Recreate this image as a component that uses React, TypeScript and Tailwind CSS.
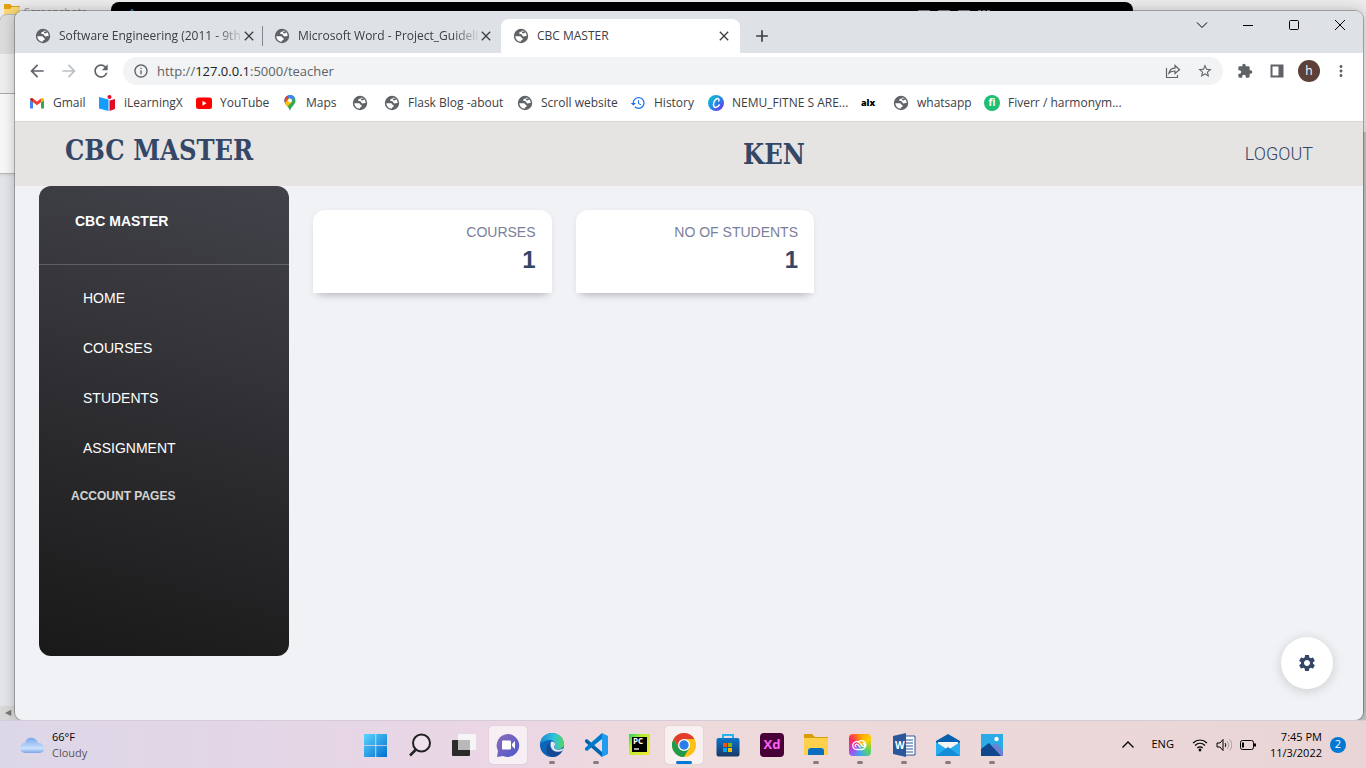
import React from "react";
import { MdExtension, MdStarBorder, MdArrowBack, MdArrowForward, MdRefresh, MdHistory, MdMoreVert, MdAdd, MdClose, MdInfoOutline, MdSettings } from "react-icons/md";

function Globe() {
  return (
    <svg viewBox="0 0 16 16" className="size-4 shrink-0" aria-hidden="true">
      <circle cx="8" cy="8" r="7.2" fill="#5f6368" />
      <path d="M2.300 8.300h3.800c1.500 0 2.400.6 2.500 1.700 1.300.1 1.400.8 1 1.500-.4.700-1.700.6-1.800 1.500v.7c-3-.2-5.300-2.300-5.500-5.400z" fill="#fff" />
      <path d="M9.300 2.400c-.2.900-.9 1.100-1.800 1.400-1.400.4-1.700 1.700-.8 2.200.8.400 1.300.1 2 .6.700.5.500 1.300 1.300 1.700 1.200.6 2.100-.5 3.600-.1.400-2.600-1.500-5.200-4.300-5.800z" fill="#fff" />
      <path d="M9 3.700l2.500-.4.600 1.200-1.600.9-1.500-.3z" fill="#5f6368" />
    </svg>
  );
}

function Tab({ title, active = false }: { title: string; active?: boolean }) {
  return (
    <div
      className={
        active
          ? "flex h-[34px] w-[239px] shrink-0 items-center rounded-t-lg bg-white pl-3 pr-2"
          : "flex h-[34px] w-[239px] shrink-0 items-center pl-3 pr-2"
      }
    >
      <Globe />
      <span
        className={
          active
            ? "ml-2 flex-1 whitespace-nowrap"
            : "ml-2 flex-1 whitespace-nowrap [mask-image:linear-gradient(to_right,black_86%,transparent_102%)]"
        }
      >
        {title}
      </span>
      <button aria-label={"Close " + title} className="text-[#3c4043]">
        <MdClose className="size-4" />
      </button>
    </div>
  );
}

function Bookmark({ icon, label, width }: { icon: React.ReactNode; label?: string; width: string }) {
  return (
    <a href="#" aria-label={label || "Bookmark"} className={"flex shrink-0 items-center gap-2 whitespace-nowrap " + width}>
      {icon}
      {label && <span>{label}</span>}
    </a>
  );
}

const Gmail = () => (
  <svg viewBox="0 0 16 16" className="size-4">
    <path d="M1 13.500h3V7.300L1 5z" fill="#4285f4" />
    <path d="M12 13.500h3V5l-3 2.300z" fill="#34a853" />
    <path d="M4 3.500l4 3 4-3v3.800l-4 3-4-3z" fill="#ea4335" />
    <path d="M1 5c0-2 1.700-2.400 3-1.500v3.800z" fill="#c5221f" />
    <path d="M15 5c0-2-1.700-2.400-3-1.500v3.800z" fill="#fbbc04" />
  </svg>
);
const Learning = () => (
  <svg viewBox="0 0 17 16" className="h-4 w-[17px]">
    <path d="M0 2l9.500 2.500V16L0 13.500z" fill="#169bff" />
    <path d="M10.500 5.500L16 4v10l-5.500 2z" fill="#e50a24" />
    <circle cx="10.500" cy="2" r="2" fill="#e50a24" />
  </svg>
);
const YouTube = () => (
  <svg viewBox="0 0 16 16" className="size-4">
    <rect y="2.500" width="16" height="11.500" rx="2.500" fill="#f00" />
    <path d="M6.500 5.800v5l4-2.500z" fill="#fff" />
  </svg>
);
const Maps = () => (
  <svg viewBox="0 0 16 16" className="size-4">
    <defs>
      <clipPath id="pin"><path d="M8 0a5.500 5.500 0 0 1 5.500 5.500C13.500 9.500 9.500 11 8 16 6.500 11 2.500 9.500 2.500 5.500A5.500 5.500 0 0 1 8 0z" /></clipPath>
    </defs>
    <g clipPath="url(#pin)">
      <path d="M0 0h16v16H0z" fill="#34a853" />
      <path d="M2 8L12 0 8 0 0 4z" fill="#1a73e8" />
      <path d="M0 3l4-3 4 5-5 6z" fill="#ea4335" />
      <path d="M5 0h8l2 2-7 4z" fill="#4285f4" />
      <path d="M2 9l5-6 3 4-6 6z" fill="#fbbc04" />
    </g>
    <circle cx="8" cy="5.500" r="2" fill="#fff" />
  </svg>
);
const Canva = () => (
  <svg viewBox="0 0 16 16" className="size-4">
    <defs>
      <linearGradient id="canva" x1="0" y1="0" x2="1" y2="1"><stop stopColor="#00d1c8" /><stop offset=".55" stopColor="#2b7fe8" /><stop offset="1" stopColor="#8b1fe8" /></linearGradient>
    </defs>
    <circle cx="8" cy="8" r="8" fill="url(#canva)" />
    <path d="M10.800 6c1-2.500-1.200-3.300-3.100-1.600-3 2.700-2.900 7.900-.1 8 1.700 0 3-1.200 3.700-2.500" fill="none" stroke="#fff" strokeWidth="1.500" strokeLinecap="round" />
  </svg>
);

const bookmarks: { icon: React.ReactNode; label?: string; width: string }[] = [
  { icon: <Gmail />, label: "Gmail", width: "w-[70px]" },
  { icon: <Learning />, label: "iLearningX", width: "w-[97px]" },
  { icon: <YouTube />, label: "YouTube", width: "w-[86px]" },
  { icon: <Maps />, label: "Maps", width: "w-[70px]" },
  { icon: <Globe />, width: "w-8" },
  { icon: <Globe />, label: "Flask Blog -about", width: "w-[133px]" },
  { icon: <Globe />, label: "Scroll website", width: "w-[113px]" },
  { icon: <MdHistory className="size-4 text-[#1a73e8]" />, label: "History", width: "w-[78px]" },
  { icon: <Canva />, label: "NEMU_FITNE S ARE...", width: "w-[153px]" },
  { icon: <span className="w-4 text-[9px] font-black text-black">alx</span>, width: "w-8" },
  { icon: <Globe />, label: "whatsapp", width: "w-[91px]" },
  { icon: <span className="flex size-4 items-center justify-center rounded-full bg-[#1dbf73] text-[10px] font-bold text-white">fi</span>, label: "Fiverr / harmonym...", width: "w-[140px]" },
];

function Chrome() {
  return (
    <header className="text-xs text-[#3c4043]">
      <div className="flex h-[42px] rounded-t-lg bg-[#dee1e6]">
        <div className="flex min-w-0 items-end pl-2">
          <Tab title="Software Engineering (2011 - 9th" />
          <div className="-mr-px mb-[7px] h-5 w-px shrink-0 bg-[#80868b]" />
          <Tab title="Microsoft Word - Project_Guideli" />
          <Tab title="CBC MASTER" active />
          <button aria-label="New tab" className="mb-[7px] ml-3"><MdAdd className="size-5" /></button>
        </div>
        <div className="ml-auto flex h-7 items-center gap-8 pr-4 text-black">
          <button aria-label="Search tabs"><svg viewBox="0 0 14 14" className="size-3.5"><path d="M2 4.500L7 9.500l5-5" fill="none" stroke="currentColor" /></svg></button>
          <button aria-label="Minimize"><svg viewBox="0 0 14 14" className="size-3.5"><path d="M2 7.500h10" stroke="currentColor" /></svg></button>
          <button aria-label="Maximize"><svg viewBox="0 0 14 14" className="size-3.5"><rect x="2.500" y="2.500" width="9" height="9" rx="1" fill="none" stroke="currentColor" /></svg></button>
          <button aria-label="Close window"><svg viewBox="0 0 14 14" className="size-3.5"><path d="M2 2l10 10M12 2L2 12" stroke="currentColor" /></svg></button>
        </div>
      </div>
      <div className="flex h-9 items-center bg-white pl-3 pr-[13px] text-[#5f6368]">
        <button aria-label="Back" className="mr-3"><MdArrowBack className="size-5" /></button>
        <button aria-label="Forward" className="mr-3 text-[#bcc0c4]"><MdArrowForward className="size-5" /></button>
        <button aria-label="Reload" className="mr-3"><MdRefresh className="size-5" /></button>
        <div className="flex h-7 flex-1 items-center rounded-full bg-[#f1f3f4] pl-2.5 pr-2.5">
          <MdInfoOutline className="size-4" />
          <a href="#" className="ml-2 flex-1 pt-px text-[13px]">http://<span className="text-[#202124]">127.0.0.1</span>:5000/teacher</a>
          <button aria-label="Share" className="mr-4">
            <svg viewBox="0 0 16 16" className="size-4"><path d="M1.500 5v9.500h11V12M4 10c.8-3.200 3-4.800 6-4.800V2.500l4.500 4.200L10 10.500V8c-2.500 0-4.500.5-6 2z" fill="none" stroke="currentColor" strokeWidth="1.200" /></svg>
          </button>
          <button aria-label="Bookmark this page"><MdStarBorder className="size-4" /></button>
        </div>
        <button aria-label="Extensions" className="ml-3.5"><MdExtension className="size-4" /></button>
        <button aria-label="Side panel" className="ml-4"><svg viewBox="0 0 16 16" className="size-4"><path d="M1.500 1.500h13v13h-13zM3.500 3.500v9h6v-9z" fill="currentColor" fillRule="evenodd" /></svg></button>
        <button aria-label="Profile" className="ml-[13px] size-[22px] rounded-full bg-[#5d4037] text-white">h</button>
        <button aria-label="Menu" className="ml-3"><MdMoreVert className="size-[18px]" /></button>
      </div>
      <nav aria-label="Bookmarks" className="flex h-8 items-center overflow-hidden bg-white pb-1 pl-3.5">
        {bookmarks.map((b, i) => <Bookmark key={i} {...b} />)}
      </nav>
    </header>
  );
}

function StatCard({ label, value }: { label: string; value: string }) {
  return (
    <div className="h-[83px] rounded-t-xl bg-white px-4 pt-3 text-right shadow-[0_8px_8px_-6px_rgba(0,0,0,0.2),0_2px_6px_rgba(0,0,0,0.06)]">
      <p className="text-sm leading-5 text-[#7b809a]">{label}</p>
      <h4 className="text-2xl font-bold leading-9 text-[#344767]">{value}</h4>
    </div>
  );
}

function Page() {
  return (
    <div className="relative flex flex-1 flex-col rounded-b-lg bg-[#f0f2f5] font-['Liberation_Sans',Arial,sans-serif]">
      <div className="grid h-[65px] grid-cols-3 items-center border-t border-[#d5d6d8] bg-[#e5e4e2] px-[50px] text-[#344767]">
        <h1 className="pb-1.5 font-['DejaVu_Serif_Condensed','DejaVu_Serif',serif] text-[27px] font-bold leading-8">CBC MASTER</h1>
        <h2 className="pl-[170px] pt-0.5 text-center font-['DejaVu_Serif_Condensed','DejaVu_Serif',serif] text-[27px] font-bold leading-8">KEN</h2>
        <a href="#" className="justify-self-end font-[Roboto,sans-serif] text-lg font-light">LOGOUT</a>
      </div>
      <div className="flex items-start gap-6 px-6">
        <aside className="h-[470px] w-[250px] shrink-0 rounded-xl bg-[linear-gradient(195deg,#42424a,#191919)] text-sm text-white">
          <div className="h-[79px] border-b border-white/20 pl-9 pt-[25px] font-bold">CBC MASTER</div>
          <nav className="pl-11 pt-2">
            {["HOME", "COURSES", "STUDENTS", "ASSIGNMENT"].map((item) => (
              <a key={item} href="#" className="flex h-[50px] items-center">{item}</a>
            ))}
          </nav>
          <h6 className="pl-8 pt-[15px] text-xs font-bold text-white/80">ACCOUNT PAGES</h6>
        </aside>
        <main className="grid flex-1 grid-cols-4 gap-6 pt-6">
          <StatCard label="COURSES" value="1" />
          <StatCard label="NO OF STUDENTS" value="1" />
        </main>
      </div>
      <button aria-label="Settings" className="absolute bottom-[31px] right-[30px] flex size-[52px] items-center justify-center rounded-full bg-white text-[#344767] shadow-[0_2px_12px_rgba(0,0,0,0.16)]">
        <MdSettings className="size-5" />
      </button>
    </div>
  );
}

const Svg = ({ children }: { children: React.ReactNode }) => <svg viewBox="0 0 24 24" className="size-6">{children}</svg>;

const apps: { name: string; run?: boolean; active?: boolean; icon: React.ReactNode }[] = [
  { name: "Start", icon: <Svg><defs><linearGradient id="win" x1="0" y1="0" x2="1" y2="1"><stop stopColor="#5cd5ff" /><stop offset="1" stopColor="#006fd0" /></linearGradient></defs><path d="M0 1h11.300v11.200H0zM12.200 1H23v11.200H12.200zM0 13h11.300v11H0zM12.200 13H23v11H12.200z" fill="url(#win)" /></Svg> },
  { name: "Search", icon: <Svg><circle cx="13.500" cy="10" r="8.500" fill="#fff" fillOpacity=".3" stroke="#222" strokeWidth="2" /><path d="M8 16.500L2 22.500" stroke="#222" strokeWidth="2.500" /></Svg> },
  { name: "Task view", icon: <Svg><rect x="0" y="7" width="18" height="16" rx="1" fill="#2b2b2b" /><rect x="6" y="1" width="18" height="16" rx="1" fill="#f5f5f5" /><path d="M6 7h12v10H6z" fill="#b8b8b8" /></Svg> },
  { name: "Chat", active: true, icon: <Svg><defs><linearGradient id="chat" x1="0" y1="0" x2="1" y2="1"><stop stopColor="#8f6bb8" /><stop offset="1" stopColor="#4a58cc" /></linearGradient></defs><path d="M12 1a11.500 11.500 0 1 1-5 22L1 24l1-6A11.500 11.500 0 0 1 12 1z" fill="url(#chat)" /><rect x="6" y="7.500" width="9" height="9" rx="1" fill="#fff" /><path d="M16 11l3-3v8l-3-3z" fill="#fff" /></Svg> },
  { name: "Edge", run: true, icon: <Svg><defs><linearGradient id="edge" x1="0" x2="1"><stop stopColor="#1688d8" /><stop offset=".6" stopColor="#30c5dc" /><stop offset="1" stopColor="#55d65b" /></linearGradient></defs><circle cx="12" cy="12" r="12" fill="#0b65b8" /><path d="M0 11C1 4 6 0 12 0c8 0 12 6 12 11 0 4-4 6-8 5-3-.7-1-2-1-5 0-2-2-4-5-4-4 0-8 2-10 4z" fill="url(#edge)" /><path d="M10 9c-2 5 2 10 8 10 2 0 3-.5 4-1-2 4-6 6-10 6-6-1-8-9-2-15z" fill="#154994" /><path d="M11 9c1-1 4 0 4 2 0 2-2 3 0 5 3 1 6 1 9-1l-2 3c-8 3-13-3-11-9z" fill="#eee4ed" /></Svg> },
  { name: "Visual Studio Code", run: true, icon: <Svg><path d="M1 7l2-1 15 13v5L1 9z" fill="#0065a9" /><path d="M1 17l2 1L18 6V0L1 15z" fill="#007acc" /><path d="M18 0l6 3v18l-6 3z" fill="#1f9cf0" /></Svg> },
  { name: "PyCharm", icon: <Svg><defs><linearGradient id="py" x1="0" y1="0" x2="1" y2="1"><stop stopColor="#21d75a" /><stop offset=".35" stopColor="#b7ed32" /><stop offset="1" stopColor="#f5e934" /></linearGradient></defs><path d="M1 1h21v21H1z" fill="url(#py)" /><path d="M4 4h15v15H4z" fill="#000" /><text x="5" y="11" fontSize="8" fontWeight="700" fill="#fff">PC</text><path d="M6 16h5" stroke="#fff" strokeWidth="1.300" /></Svg> },
  { name: "Google Chrome", active: true, run: true, icon: <Svg><circle cx="12" cy="12" r="12" fill="#fbc116" /><path d="M1.600 6A12 12 0 0 1 22.400 6H12l-5 9z" fill="#e33b2e" /><path d="M1.600 6A12 12 0 0 0 12 24l5.200-9-10.400 0z" fill="#229a4b" /><circle cx="12" cy="12" r="6" fill="#fff" /><circle cx="12" cy="12" r="4.700" fill="#2c7de9" /></Svg> },
  { name: "Microsoft Store", icon: <Svg><defs><linearGradient id="store" x1="0" y1="0" x2="0" y2="1"><stop stopColor="#0877cb" /><stop offset="1" stopColor="#1b3766" /></linearGradient></defs><path d="M7 6V2h10v4" fill="none" stroke="#22b5eb" strokeWidth="2" /><rect x="0.500" y="5" width="23" height="18.500" rx="2" fill="url(#store)" /><path d="M7 10h4v4H7z" fill="#f25022" /><path d="M12 10h4v4h-4z" fill="#7fba00" /><path d="M7 15h4v4H7z" fill="#00a4ef" /><path d="M12 15h4v4h-4z" fill="#ffb900" /></Svg> },
  { name: "Adobe XD", icon: <span className="flex size-6 items-center justify-center rounded bg-[#470137] text-[13px] font-bold text-[#ff61f6]">Xd</span> },
  { name: "File Explorer", run: true, icon: <Svg><path d="M0 1h8l3 3h13v6H0z" fill="#d99d08" /><path d="M0 5h24v17H0z" fill="#ffd04c" /><path d="M4 22v-4c0-2 1-3 3-3h10c2 0 3 1 3 3v4z" fill="#0b6fc0" /></Svg> },
  { name: "Creative Cloud", run: true, icon: <span className="flex size-[22px] items-center justify-center rounded bg-[conic-gradient(#ff9d00,#ffd000,#5ed45e,#3ca8f2,#b742ea,#ff2460,#ff9d00)]"><svg viewBox="0 0 16 16" className="size-4"><path d="M10 12.500H4.800a4 4 0 1 1 1.500-7.700C8 5.500 9 8.500 11 9.500c2 .6 2.500-3-.2-3M10 12.500a4.500 4.500 0 1 0-4-7.500M4.500 10c-2-.2-1.500-3.200.5-2.800 1.500.3 2 2.300 3.500 3.300" fill="none" stroke="#fff" strokeWidth="1.300" /></svg></span> },
  { name: "Word", run: true, icon: <Svg><path d="M12 3h11v19H12z" fill="#fff" stroke="#2b579a" /><path d="M14 7h7M14 10h7M14 13h7M14 16h7M14 19h7" stroke="#2b579a" /><path d="M1 3l13-3v24L1 21z" fill="#2b579a" /><text x="3" y="16" fontSize="10" fontWeight="700" fill="#fff">W</text></Svg> },
  { name: "Mail", run: true, icon: <Svg><path d="M0 8l12-7 12 7v5H0z" fill="#0561ad" /><path d="M2 9h20v10H2z" fill="#f5f5f5" /><path d="M0 9l12 8 12-8v14H0z" fill="#28aef0" /><path d="M0 23l12-9 12 9z" fill="#168bd6" /></Svg> },
  { name: "Photos", run: true, icon: <Svg><path d="M1 1h22v22H1z" fill="#2babe5" /><path d="M11 14l5-4 7 8v5h-9z" fill="#6d80d4" /><path d="M1 16l8-6 12 13H1z" fill="#12468c" /><circle cx="16.500" cy="6" r="2.200" fill="#fff" /></Svg> },
];

function Taskbar() {
  return (
    <footer className="relative flex h-12 items-center border-t border-[#d6cbd8] bg-[linear-gradient(to_right,#dcd7e8,#ead6e5_35%,#efdadb_50%,#e9d5d5)] text-black">
      <button className="ml-5 flex w-[337px] items-center gap-2 text-left leading-4">
        <svg viewBox="0 0 24 24" className="size-6"><defs><linearGradient id="cloud" x1="0" y1="0" x2="0" y2="1"><stop stopColor="#77a7f0" /><stop offset=".7" stopColor="#c9e1fc" /><stop offset="1" stopColor="#7aa4e8" /></linearGradient></defs><path d="M5 20a5 5 0 0 1 0-10c1-7 11-7 13 0 8 0 8 10 1 10z" fill="url(#cloud)" /></svg>
        <span className="text-[11px]">66°F<br /><span className="text-[#57535a]">Cloudy</span></span>
      </button>
      <div className="flex shrink-0 items-center gap-1.5">
        {apps.map((app) => (
          <button key={app.name} aria-label={app.name} className={app.active ? "relative flex h-[38px] w-[38px] items-center justify-center rounded bg-white/60 shadow-[0_0_1px_rgba(0,0,0,0.25)]" : "relative flex h-[38px] w-[38px] items-center justify-center"}>
            {app.icon}
            {app.run && <span className={app.active ? "absolute bottom-0 h-[3px] w-4 rounded-full bg-[#0078d4]" : "absolute bottom-0 h-[3px] w-1.5 rounded-full bg-[#857b80]"} />}
          </button>
        ))}
      </div>
      <div className="ml-auto flex items-center pr-5 text-[11px]">
        <button aria-label="Show hidden icons" className="mr-4"><svg viewBox="0 0 14 14" className="size-3.5"><path d="M1.500 9.500L7 4l5.500 5.500" fill="none" stroke="currentColor" strokeWidth="1.300" /></svg></button>
        <span className="mr-[18px]">ENG</span>
        <svg viewBox="0 0 16 16" className="mr-2 size-4" fill="none" stroke="currentColor" strokeWidth="1.200"><path d="M1 6c4-4 10-4 14 0M3 8.500c3-3 7-3 10 0M5.300 11c1.600-1.600 3.800-1.600 5.400 0" /><circle cx="8" cy="13" r=".8" fill="currentColor" /></svg>
        <svg viewBox="0 0 16 16" className="mr-2 size-4" fill="none" stroke="currentColor"><path d="M1 6h3l3-3.500v11L4 10H1zM9 6c1 1 1 3 0 4" /><path d="M11 4c2 2 2 6 0 8M13.500 2.500c3 3 3 8 0 11" stroke="#a99ca0" /></svg>
        <svg viewBox="0 0 16 16" className="mr-3.5 size-4" fill="none" stroke="currentColor"><rect x=".5" y="3.500" width="13" height="9" rx="2" /><path d="M15 6.500v3" strokeWidth="2" /><path d="M3 5.500v5" strokeWidth="2" /></svg>
        <span className="mr-2 text-right leading-4">7:45 PM<br />11/3/2022</span>
        <span className="flex size-4 items-center justify-center rounded-full bg-[#0078d4] text-white">2</span>
      </div>
    </footer>
  );
}

function BackgroundWindows() {
  return (
    <>
      <div className="absolute left-1 top-1 -z-10 flex items-center gap-1 text-[11px] text-[#999]">
        <svg viewBox="0 0 16 16" className="size-4"><path d="M0 0h6l2 2h8v12H0z" fill="#e0a010" /><path d="M0 5h6l2-2h8v12H0z" fill="#fbd874" /></svg>
        Screenshots
      </div>
      <div className="absolute left-[111px] right-[233px] top-0.5 -z-10 flex h-10 items-start justify-end gap-2 rounded-t-lg bg-black pr-[143px] pt-2">
        <span className="mr-auto ml-[18px] size-1.5 rotate-45 bg-[#2e8ccf]" />
        <span className="size-3 border border-[#aaa]" />
        <span className="size-3 border border-[#aaa]" />
        <span className="size-3 border border-[#aaa]" />
        <span className="size-3 border border-dashed border-[#aaa]" />
      </div>
      <div className="absolute -left-px top-3.5 -z-10 h-40 w-8 rounded-tl-lg border border-[#b9b9b9] bg-[linear-gradient(#dcdcdc_0_39px,#eee_39px_78px,#aaa_78px_79px,#f7f7f7_79px)] shadow" />
      <div className="absolute bottom-0 left-0 top-[175px] -z-20 w-4 bg-[#e4e5ea]" />
      <div className="absolute bottom-0 right-0 top-[132px] -z-10 w-4 bg-[#c4c4c4]" />
      <div className="absolute bottom-0 left-0 -z-10 h-3.5 w-6 bg-[#d8d8d8] pl-[5px] text-[8px] text-[#777]">◀</div>
    </>
  );
}

export default function App() {
  return (
    <div className="flex min-h-screen flex-col overflow-hidden bg-[#ececec] font-['Open_Sans','Noto_Sans',sans-serif]">
      <div className="relative isolate flex flex-1 flex-col pl-[15px] pr-[3px] pt-[11px]">
        <BackgroundWindows />
        <div className="flex flex-1 flex-col rounded-lg shadow-[0_0_0_1px_rgba(0,0,0,0.25),0_0_14px_rgba(0,0,0,0.25)]">
          <Chrome />
          <Page />
        </div>
      </div>
      <Taskbar />
    </div>
  );
}
